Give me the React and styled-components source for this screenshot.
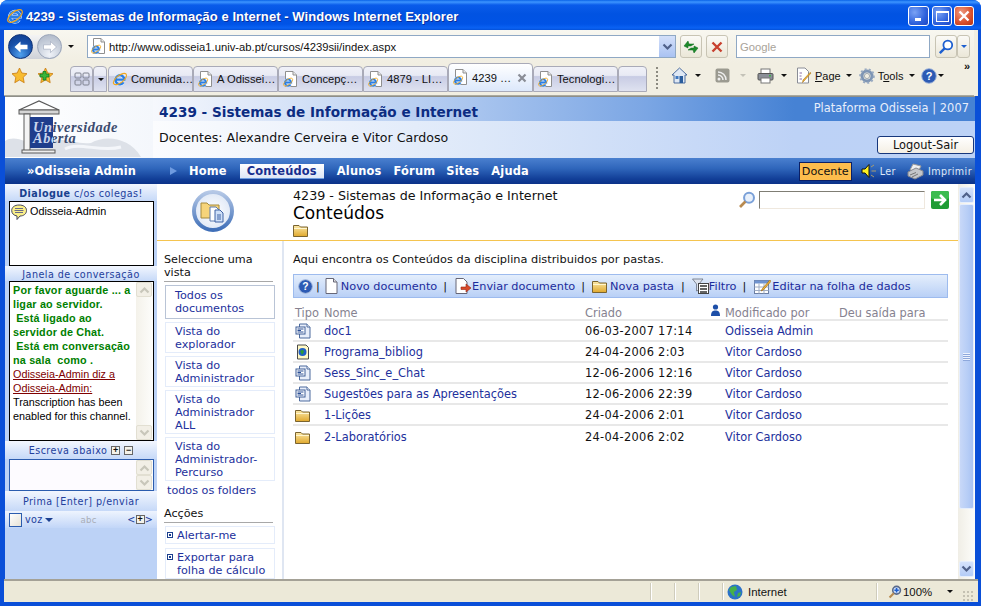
import React from 'react';
import styled, { createGlobalStyle } from 'styled-components';

const Global = createGlobalStyle`
  html, body { margin: 0; padding: 0; background: #fff; overflow: hidden; }
  * { box-sizing: border-box; }
`;
const UI = `"Liberation Sans", Arial, sans-serif`;
const WEB = `"DejaVu Sans", Verdana, sans-serif`;

const Win = styled.div`
  width: 981px; height: 606px; display: flex; flex-direction: column; overflow: hidden;
  border-radius: 8px 8px 0 0; background: #0a4fd8; font-family: ${UI};
`;
const TitleBar = styled.div`
  height: 30px; flex: none; display: flex; align-items: center; padding: 2px 7px 0 6px;
  background: linear-gradient(180deg, #0a63e8 0, #3d95ff 2px, #0a5cea 5px, #0153e2 14px, #0053e6 24px, #0a62f4 28px, #0350d8 30px);
`;
const TitleText = styled.div`
  margin-left: 2px; flex: 1; color: #fff; font: bold 13px ${UI}; letter-spacing: .06px; text-shadow: 1px 1px 0 #0a2f9c; white-space: nowrap;
`;
const WinBtn = styled.div`
  width: ${p => p.$w || 20}px; height: 20px; margin-left: ${p => p.$ml || 0}px; border: 1px solid #fff; border-radius: 3px; position: relative; flex: none;
  background: ${p => p.$close ? 'radial-gradient(circle at 35% 30%, #ee9a80, #d9502c 60%, #b53312)' : 'radial-gradient(circle at 30% 30%, #7aa2f4, #2f62dc 60%, #1c46c4)'};
  display: flex; align-items: center; justify-content: center;
`;
const Frame = styled.div`flex: 1; min-height: 0; display: flex; flex-direction: column; padding: 0 4px 4px 4px;`;
const Chrome = styled.div`flex: none; background: #f1eee2; margin-right: -1px; padding-right: 4px;`;
const AddressRow = styled.div`
  height: 33px; display: flex; align-items: center; padding-left: 4px;
  background: linear-gradient(180deg, #f8f7f0, #f1eee2);
`;
const Capsule = styled.div`
  width: 54px; height: 24px; border-radius: 12px; background: linear-gradient(180deg, #f4f4f4, #cfd2d8); flex: none;
  display: flex; align-items: center; justify-content: space-between; position: relative;
`;
const Round = styled.div`
  width: ${p => p.$size}px; height: ${p => p.$size}px; border-radius: 50%; flex: none; display: flex; align-items: center; justify-content: center;
  background: ${p => p.$on ? 'radial-gradient(circle at 50% 85%, #4ea0ee, #1850a8 55%, #0c3a8c)' : 'radial-gradient(circle at 50% 85%, #f0f3f8, #c3cbd8 60%, #a9b3c4)'};
  border: 1px solid ${p => p.$on ? '#0f3276' : '#9aa5b8'};
`;
const Caret = styled.span`
  display: inline-block; flex: none; width: 0; height: 0; margin-left: ${p => p.$ml ?? 0}px;
  border-left: ${p => p.$s || 3.5}px solid transparent; border-right: ${p => p.$s || 3.5}px solid transparent;
  border-top: ${p => p.$s || 3.5}px solid ${p => p.$c || '#111'};
`;
const Field = styled.div`
  height: 23px; width: ${p => p.$w}px; margin-left: ${p => p.$ml || 0}px; flex: none; display: flex; align-items: center;
  background: #fff; border: 1px solid #8fa8c4; font-size: 11.25px; color: ${p => p.$muted ? '#a9a49a' : '#111'}; padding-left: ${p => p.$pl ?? 4}px; white-space: nowrap;
`;
const Url = styled.span`margin-left: 2px; flex: 1;`;
const DropBtn = styled.div`
  width: 16px; height: 21px; flex: none; background: linear-gradient(180deg, #d4e0fa, #a9c2f2); display: flex; align-items: center; justify-content: center;
`;
const ToolBtn = styled.div`
  width: ${p => p.$w || 22}px; height: 23px; margin-left: ${p => p.$ml || 0}px; flex: none; display: flex; align-items: center; justify-content: center;
  border: 1px solid #c8c4b4; border-radius: 3px; background: linear-gradient(180deg, #fbfaf6, #ebe7d8);
`;
const TabRow = styled.div`
  height: 33px; display: flex; align-items: flex-end; padding-bottom: 3px; position: relative;
  border-bottom: 1px solid #a9a99e;
`;
const FavArea = styled.div`width: 66px; height: 29px; flex: none; display: flex; align-items: center; padding: 0 0 5px 7px; gap: 9px;`;
const Tab = styled.div`
  width: ${p => p.$w || 85}px; height: ${p => p.$active ? 29 : 26}px; flex: none; display: flex; align-items: center; gap: 3px; padding: 0 ${p => p.$active ? 5 : 2}px 0 3px;
  border: 1px solid #a9aab8; border-radius: 4px 4px 0 0; font-size: 11.2px; color: #111; white-space: nowrap;
  background: ${p => p.$active ? 'linear-gradient(180deg, #ffffff, #dce8fb)' : 'linear-gradient(180deg, #f0f1f8 0, #e8eaf4 35%, #c8cce4 40%, #dfe2f0 100%)'};
  justify-content: ${p => p.$center ? 'center' : 'flex-start'};
  margin-right: ${p => p.$mr ?? 0}px;
`;
const TabLabel = styled.span`flex: 1;`;
const Grip = styled.div`
  width: 2px; height: 23px; margin: 0 0 2px 9px; flex: none; background: repeating-linear-gradient(180deg, #8c8a80 0 2px, transparent 2px 4px);
`;
const Commands = styled.div`
  flex: 1; height: 29px; display: flex; align-items: center; padding: 0 0 4px 0; font-size: 11px; color: #111; position: relative;
`;
const Cmd = styled.div`display: flex; align-items: center; gap: 3px; margin-left: ${p => p.$ml}px; flex: none;`;
const U = styled.span`text-decoration: underline;`;
const More = styled.span`position: absolute; right: 5px; top: -3px; font: bold 11px ${UI}; letter-spacing: -1px;`;

const PageArea = styled.div`flex: 1; min-height: 0; display: flex; flex-direction: column; background: #fff; margin-left: 1px; margin-right: 2px; border-top: 1px solid #8f8f88;`;
const Header = styled.div`height: 61px; flex: none; display: flex;`;
const LogoBox = styled.div`width: 148px; flex: none; background: linear-gradient(90deg, #fff, #f4f7fc);`;
const HeadMain = styled.div`flex: 1; display: flex; flex-direction: column; position: relative;`;
const HeadTop = styled.div`
  height: 24px; flex: none; display: flex; align-items: center; justify-content: space-between; padding: 0 6px;
  background: linear-gradient(90deg, #f6f8fd 0, #b8cff2 32%, #7ba6e4 60%, #4682d4 78%, #4682d4 100%);
`;
const CourseTitle = styled.div`font: bold 13.6px ${WEB}; color: #0c2c82; white-space: nowrap; margin-top: 5px;`;
const Platform = styled.div`font: 11.4px ${WEB}; color: #e8eefb; letter-spacing: .05px; margin-bottom: 2px;`;
const HeadBottom = styled.div`
  flex: 1; display: flex; justify-content: space-between; padding: 9px 1px 0 6px;
  background: linear-gradient(90deg, #fbfcfe 0, #dde8f9 40%, #bdd2f6 78%, #bcd2f6 100%);
`;
const Teachers = styled.div`font: 12.6px ${WEB}; color: #111; white-space: nowrap;`;
const Logout = styled.div`
  width: 97px; height: 18px; margin-top: 6px; border: 1.5px solid #17377c; border-radius: 3px; background: linear-gradient(180deg, #fff, #f4efe4);
  display: flex; align-items: center; justify-content: center; font: 11.4px ${WEB}; color: #111;
`;
const NavBar = styled.div`
  height: 26px; flex: none; display: flex; align-items: center; background: linear-gradient(180deg, #4a80cf 0, #2f66bb 40%, #123f98 80%, #0b3288 100%); color: #fff;
`;
const User = styled.div`width: 165px; flex: none; padding-left: 22px; font: bold 11.4px ${WEB}; color: #fff; letter-spacing: .15px; white-space: nowrap;`;
const NavItem = styled.div`
  font: bold 11.4px ${WEB}; margin-left: ${p => p.$ml}px; color: ${p => p.$active ? '#172e8e' : '#fff'}; letter-spacing: .2px; flex: none; text-align: center;
  ${p => p.$active ? 'width: 84px; height: 15px; line-height: 14px; background: linear-gradient(180deg,#fff,#dde6f6); border-bottom: 1px solid #6e9ce0;' : ''}
`;
const Docente = styled.div`
  width: 53px; height: 19px; margin-left: auto; background: #fdbd4d; border: 1px solid #0a1f66; font: 11.2px ${WEB}; color: #111; display: flex; align-items: center; justify-content: center;
`;
const NavTool = styled.div`
  display: flex; align-items: center; gap: ${p => p.$gap}px; margin: 0 ${p => p.$mr || 0}px 0 ${p => p.$ml}px; font: 9.6px ${WEB}; letter-spacing: .4px; color: #dfe8f8; flex: none;
`;
const Body = styled.div`flex: 1; min-height: 0; display: flex;`;
const Side = styled.div`width: 152px; flex: none; background: #bcd2f6; display: flex; flex-direction: column; overflow: hidden;`;
const SideHead = styled.div`
  height: ${p => p.$h}px; flex: none; display: flex; align-items: center; justify-content: center; gap: ${p => p.$gap || 0}px; font: 9.6px ${WEB}; letter-spacing: .45px; color: #23409c; white-space: nowrap; padding-top: ${p => p.$pt || 0}px;
  background: linear-gradient(180deg, #f2f6fe, #c6d9f8);
`;
const Strong = styled.b`color: #18418f;`;
const SmallBox = styled.span`
  width: 9px; height: 9px; border: 1px solid #666; background: #f4f2ea; display: inline-flex; align-items: center; justify-content: center; font: bold 9px/7px ${UI}; color: #111; flex: none;
`;
const Users = styled.div`
  height: 65px; flex: none; margin: 0 3px 0 4px; background: #fff; border: 1px solid #000; display: flex; align-items: flex-start; gap: 2px; padding: 2px 1px; font: 10.8px/14px ${UI}; color: #000;
`;
const Chat = styled.div`
  height: 160px; flex: none; margin: 0 3px 0 4px; background: #fff; border: 1px solid #000; display: flex; overflow: hidden;
`;
const ChatText = styled.div`flex: 1; padding: 1px 0 0 3px; font: 10.8px/14px ${UI}; color: #000; min-width: 0;`;
const Green = styled.div`color: #008000; font-weight: bold; letter-spacing: .18px;`;
const Red = styled.div`color: #800000; text-decoration: underline;`;
const MiniScroll = styled.div`
  width: 17px; flex: none; display: flex; flex-direction: column; justify-content: space-between; background: linear-gradient(90deg, #f4f2ea, #fdfdfb); padding-right: 1px;
`;
const MiniBtn = styled.div`
  height: 15px; flex: none; background: #f2efe6; border: 1px solid #e2dfd2; border-radius: 2px; display: flex; align-items: center; justify-content: center;
`;
const InputBox = styled.div`
  height: 32px; flex: none; margin: 0 3px 0 4px; background: #fdfbff; border: 1.5px solid #2b5cae; display: flex; justify-content: flex-end;
`;
const Voice = styled.div`
  height: 17px; flex: none; display: flex; align-items: center; padding: 0 4px; font: 9.6px ${WEB}; color: #23409c; letter-spacing: .3px;
  background: linear-gradient(180deg, #eef4fe, #c2d6f8);
`;
const Check = styled.span`width: 13px; height: 14px; border: 1.5px solid #2b5cae; background: linear-gradient(135deg,#fff,#e6e2d6); margin-right: 3px; flex: none;`;
const Abc = styled.span`margin-left: 27px; color: #a9adb6; font-size: 8.6px;`;
const Arrows = styled.span`margin-left: auto; display: flex; align-items: center; color: #23409c;`;

const Content = styled.div`flex: 1; min-width: 0; display: flex; flex-direction: column;`;
const Top = styled.div`height: 57px; flex: none; display: flex; border-bottom: 1px solid #f5c44f; position: relative;`;
const Badge = styled.div`width: 136px; flex: none; display: flex; align-items: center; padding: 0 0 3px 35px;`;
const Crumbs = styled.div`flex: 1; padding-top: 4px;`;
const Crumb = styled.div`font: 12.7px/15px ${WEB}; color: #111; white-space: nowrap;`;
const PageTitle = styled.div`font: 17px/20px ${WEB}; color: #000; white-space: nowrap; margin-bottom: 1px;`;
const SearchBox = styled.div`display: flex; align-items: center; height: 18px; margin: 7px 9px 0 0; flex: none;`;
const SearchInput = styled.div`
  width: 166px; height: 18px; margin: 0 6px 0 3px; border: 1px solid #7f7d74; border-right-color: #efe8de; border-bottom-color: #efe8de; background: #fff;
`;
const Lower = styled.div`flex: 1; min-height: 0; display: flex; overflow: hidden;`;
const LeftNav = styled.div`width: 127px; flex: none; border-right: 2px solid #dfe6f2; padding: 12px 6px 0 7px; overflow: hidden;`;
const NavHead = styled.div`font: 11.2px/13px ${WEB}; color: #111; border-bottom: 1px solid #a8a8a8; padding-bottom: 2px; margin: ${p => p.$mt || 0}px 3px 3px 0;`;
const ViewBox = styled.div`
  width: 110px; margin: 0 0 ${p => p.$mb ?? 3}px 1px; padding: ${p => p.$tight ? '2px 2px 1px 1px' : p.$sel ? '3px 3px 3px 9px' : '2px 3px 1px 9px'}; display: flex; gap: 4px;
  border: 1px solid ${p => p.$sel ? '#b9c4d6' : '#e4ecfa'}; font: 11.2px/13px ${WEB}; color: #22309c;
`;
const PlainLink = styled.div`font: 11.2px/13px ${WEB}; color: #22309c; margin: 0 0 0 3px; white-space: nowrap;`;
const Bullet = styled.span`
  width: 6px; height: 6px; border: 1px solid #1b3f8f; flex: none; margin-top: 3px; display: flex; align-items: center; justify-content: center;
  &::after { content: ''; width: 2px; height: 2px; background: #1b3f8f; }
`;
const Main = styled.div`flex: 1; min-width: 0; padding: 11px 10px 0 9px; position: relative;`;
const Intro = styled.div`font: 11.33px/14px ${WEB}; color: #111; margin-bottom: 8px; white-space: nowrap;`;
const ActionBar = styled.div`
  height: 24px; display: flex; align-items: center; padding-left: 4px; border: 1px solid #9dbbee; white-space: nowrap;
  background: linear-gradient(180deg, #e4eefc, #b9d0f6); font: 11.3px ${WEB}; color: #1c2c9c;
`;
const Sep = styled.span`color: #111; margin: 0 ${p => p.$r ?? 6}px 0 ${p => p.$l ?? 6}px;`;
const Action = styled.span`display: inline-flex; align-items: center; gap: ${p => p.$gap ?? 0}px;`;
const Columns = `display: grid; grid-template-columns: 29px 261px 140px 114px 1fr; align-items: center;`;
const HeadRow = styled.div`
  ${Columns} height: 23px; padding: 8px 0 0 2px; border-bottom: 2px solid #e8e8e8; font: 11.4px ${WEB}; color: #868290; white-space: nowrap;
`;
const Row = styled.div`
  ${Columns} height: 21px; padding: 1px 0 0 2px; border-bottom: ${p => p.$last ? 0 : '2px solid #e8e8e8'}; font: 11.4px ${WEB}; color: #111; white-space: nowrap;
`;
const Link = styled.span`color: #22309c;`;
const Stamp = styled.span`letter-spacing: .3px;`;
const ModHead = styled.span`position: relative;`;
const UserIcon = styled.span`position: absolute; left: -15px; top: -2px; display: flex;`;

const Scroll = styled.div`
  width: 17px; flex: none; display: flex; flex-direction: column; background: linear-gradient(90deg, #f0eee6, #fdfdfa); padding: 3px 1px 2px 1px;
`;
const ScrollBtn = styled.div`
  height: 16px; flex: none; background: linear-gradient(180deg, #d5e2fb, #b4ccf7); border: 1px solid #e6eefc; border-radius: 2px; display: flex; align-items: center; justify-content: center;
`;
const Thumb = styled.div`
  height: 305px; margin: 1px 0 auto; flex: none; background: linear-gradient(90deg, #c8d8f8, #b6cdf6 60%, #a9c2f2); border: 1px solid #e6eefc; border-radius: 2px; display: flex; align-items: center; justify-content: center;
`;
const GripLines = styled.div`width: 7px; height: 8px; background: repeating-linear-gradient(180deg, #eef3fe 0 1px, #8ea8dc 1px 2px);`;
const Status = styled.div`
  height: 23px; flex: none; margin-right: -1px; padding-right: 4px; display: flex; align-items: center; background: #ece9d8; border-top: 2px solid #a4a196; font-size: 11.4px; color: #111; position: relative;
`;
const Cell = styled.div`
  width: ${p => p.$w}px; height: 17px; flex: none; border-right: 1px solid #cfccbc; box-shadow: 1px 0 0 #fff; display: flex; align-items: center; gap: 5px; padding-left: ${p => p.$pl || 0}px;
`;
const ZoomCell = styled.div`flex: 1; height: 17px; display: flex; align-items: center; gap: 1px; padding-left: 11px;`;
const Resize = styled.div`
  position: absolute; right: 5px; bottom: 1px; width: 11px; height: 11px;
  background: radial-gradient(circle, #c4c1b2 1px, transparent 1.2px) 0 0 / 4px 4px;
`;

const IeE = ({ w = 2.3 }) => (
  <>
    <path d="M3.6 8.6H12.4A4.5 4.5 0 1 0 11.6 11.3" fill="none" stroke="#dcecff" strokeWidth={w + 1} />
    <path d="M3.6 8.6H12.4A4.5 4.5 0 1 0 11.6 11.3" fill="none" stroke="#2a7fe6" strokeWidth={w} />
    <ellipse cx="8" cy="8" rx="7.8" ry="3.6" transform="rotate(-38 8 8)" fill="none" stroke="#f0a71d" strokeWidth="1.1" />
  </>
);
const IeLogo = ({ s = 16 }) => (
  <svg width={s} height={s} viewBox="0 0 16 16" style={{ flex: 'none' }}><IeE /></svg>
);
const PageIe = () => (
  <svg width="17" height="17" viewBox="0 0 17 17" style={{ flex: 'none' }}>
    <path d="M3.5 .5H11L14.5 4V15.5H3.5Z" fill="#fff" stroke="#8f8f8f" />
    <path d="M11 .5V4H14.5" fill="#e8e8e8" stroke="#8f8f8f" />
    <g transform="translate(.5 5.5) scale(.7)"><IeE w={2.6} /></g>
  </svg>
);
const Arrow = ({ dir, c = '#fff' }) => (
  <svg width="16" height="14" viewBox="0 0 16 14" style={dir === 'r' ? { transform: 'scaleX(-1)' } : undefined}>
    <path d="M1.5 7L7.5 1.5V4.8H14.5V9.2H7.5V12.5Z" fill={c} stroke={dir === 'r' ? '#9aa5b8' : 'none'} strokeWidth=".6" />
  </svg>
);
const Star = ({ plus }) => (
  <svg width="17" height="17" viewBox="0 0 17 17" style={{ flex: 'none' }}>
    <path d="M8.5 1L10.8 6L16 6.7L12.2 10.3L13.2 15.7L8.5 13L3.8 15.7L4.8 10.3L1 6.7L6.2 6Z" fill="#f8bc30" stroke="#c87a10" strokeWidth=".8" />
    {plus && <path d="M3 7H6V4.5H9V7H12V10H9V13H6V10H3Z" fill="#39b539" stroke="#0f7a1f" strokeWidth=".8" />}
  </svg>
);
const Tiles = () => (
  <svg width="16" height="14" viewBox="0 0 16 14">
    {[[1, 1], [9, 1], [1, 8], [9, 8]].map(([x, y], i) => <rect key={i} x={x} y={y} width="6" height="5" rx="1" fill="none" stroke="#7e8290" />)}
  </svg>
);
const Home = () => (
  <svg width="17" height="17" viewBox="0 0 17 17" style={{ flex: 'none' }}>
    <path d="M8.5 1L16 8H14V16H3V8H1Z" fill="#dfe8f4" stroke="#3b5f96" strokeWidth=".9" />
    <rect x="8.5" y="9" width="3.5" height="7" fill="#2a5c9c" />
    <rect x="4.5" y="9" width="3" height="3" fill="#3e78c0" />
  </svg>
);
const Rss = () => (
  <svg width="15" height="15" viewBox="0 0 15 15" style={{ flex: 'none' }}>
    <rect x=".5" y=".5" width="14" height="14" rx="2" fill="#9b9a90" />
    <circle cx="4" cy="11" r="1.5" fill="#eee" />
    <path d="M3 7A5 5 0 0 1 8 12M3 4A8 8 0 0 1 11 12" fill="none" stroke="#eee" strokeWidth="1.5" />
  </svg>
);
const Printer = () => (
  <svg width="17" height="16" viewBox="0 0 17 16" style={{ flex: 'none' }}>
    <rect x="4" y="1" width="9" height="5" fill="#fff" stroke="#777" />
    <rect x="1" y="5.5" width="15" height="6.5" rx="1" fill="#8b8f98" stroke="#555" />
    <rect x="4" y="10" width="9" height="5" fill="#fff" stroke="#777" />
    <rect x="12" y="7" width="2" height="1.5" fill="#3fb04a" />
  </svg>
);
const PageTool = () => (
  <svg width="16" height="17" viewBox="0 0 16 17" style={{ flex: 'none' }}>
    <path d="M1.5 1H9L12.5 4.5V16H1.5Z" fill="#fff" stroke="#8a8d96" />
    <path d="M3.5 6H6M3.5 9H5.5M3.5 12H6" stroke="#8a6fa8" />
    <path d="M15 6L8 14L6.5 15.5L7 13L14 5.5Z" fill="#f3b63c" stroke="#a9741a" strokeWidth=".6" />
  </svg>
);
const Gear = () => (
  <svg width="16" height="16" viewBox="0 0 16 16" style={{ flex: 'none' }}>
    <circle cx="8" cy="8" r="5" fill="none" stroke="#7e95b4" strokeWidth="3" />
    <circle cx="8" cy="8" r="6.8" fill="none" stroke="#98a9c0" strokeWidth="2" strokeDasharray="2 2.2" />
    <circle cx="8" cy="8" r="2.6" fill="#f1eee2" stroke="#6f7d92" strokeWidth=".6" />
  </svg>
);
const Help = ({ s = 16 }) => (
  <svg width={s} height={s} viewBox="0 0 16 16" style={{ flex: 'none' }}>
    <circle cx="8" cy="8" r="7.3" fill="#2c5ab4" stroke="#9fb3d8" />
    <text x="8" y="12" textAnchor="middle" fontFamily="Liberation Sans" fontWeight="bold" fontSize="11" fill="#fff">?</text>
  </svg>
);
const Magnifier = ({ c = '#1d5fd0', s = 16, h = '#fff', plus }) => (
  <svg width={s} height={s} viewBox="0 0 16 16" style={{ flex: 'none' }}>
    <circle cx="9.8" cy="6" r="4.4" fill={h} stroke={c} strokeWidth="1.8" />
    <path d="M6.6 9.4L1.8 14.2" stroke={c === '#1d5fd0' ? c : '#b88a50'} strokeWidth="2.4" />
    {plus && <path d="M7.3 6H12.3M9.8 3.5V8.5" stroke="#1d5fd0" strokeWidth="1.8" />}
  </svg>
);
const Doc = () => (
  <svg width="16" height="16" viewBox="0 0 16 16">
    <path d="M4.5 1H12L15 4V15H4.5Z" fill="#e8eefa" stroke="#4d6b9e" />
    <path d="M12 1V4H15" fill="#fff" stroke="#4d6b9e" />
    <rect x="1" y="4" width="9" height="7" fill="#fff" stroke="#3f5f98" />
    <path d="M2.5 6H8.5M2.5 7.5H6M2.5 9H8.5" stroke="#2a4f96" />
  </svg>
);
const WebDoc = () => (
  <svg width="16" height="16" viewBox="0 0 16 16">
    <path d="M2.5 1H11L13.5 3.5V15H2.5Z" fill="#fff9c4" stroke="#4a4a4a" />
    <circle cx="7.5" cy="8" r="4" fill="#1f5fc8" />
    <path d="M5 7L8 5.5L9 8L7 11Z" fill="#2d9a3a" />
  </svg>
);
const Folder = ({ w = 16, h = 13 }) => (
  <svg width={w} height={h} viewBox="0 0 16 13" style={{ flex: 'none', display: 'block' }}>
    <defs><linearGradient id="fg" x1="0" y1="0" x2="0" y2="1"><stop offset="0" stopColor="#fbe8a8" /><stop offset="1" stopColor="#e0a82c" /></linearGradient></defs>
    <path d="M.5 12.5V1.5H6L7.5 3H14.5V12.5Z" fill="url(#fg)" stroke="#7a6430" />
    <path d="M1 4.5H14" stroke="#fff6cf" />
  </svg>
);
const NewDoc = () => (
  <svg width="13" height="16" viewBox="0 0 13 16" style={{ flex: 'none' }}>
    <path d="M1 .5H8.5L12 4V15.5H1Z" fill="#fff" stroke="#667" />
    <path d="M8.5 .5V4H12" fill="#ddd" stroke="#667" />
  </svg>
);
const SendDoc = () => (
  <svg width="17" height="16" viewBox="0 0 17 16" style={{ flex: 'none' }}>
    <path d="M1 .5H8.5L12 4V15.5H1Z" fill="#fff" stroke="#667" />
    <path d="M6 9H11V6L16 10L11 14V11.5H6Z" fill="#d8492a" stroke="#98240f" strokeWidth=".6" />
  </svg>
);
const Funnel = () => (
  <svg width="17" height="16" viewBox="0 0 17 16" style={{ flex: 'none' }}>
    <path d="M.5 1H11L7 6V12L4.5 13V6Z" fill="#dde3ee" stroke="#68707f" strokeWidth=".8" />
    <rect x="6.5" y="5.5" width="10" height="10" fill="#fff" stroke="#444" />
    <path d="M8 8H15M8 11H15M8 14H15" stroke="#333" strokeWidth="1.4" />
  </svg>
);
const Sheet = () => (
  <svg width="17" height="17" viewBox="0 0 17 17" style={{ flex: 'none' }}>
    <rect x=".5" y="2.5" width="14" height="13" fill="#fff" stroke="#6c7fa4" />
    <rect x=".5" y="2.5" width="14" height="3" fill="#6f93d0" />
    <path d="M.5 9H14.5M.5 12.5H14.5M5 5.5V15.5M10 5.5V15.5" stroke="#a0adc4" />
    <path d="M16 2L8.5 10.5L7 13L9.5 11.8L16.8 3.5Z" fill="#f3b63c" stroke="#9c6a14" strokeWidth=".7" />
  </svg>
);
const Bubble = () => (
  <svg width="17" height="17" viewBox="0 0 17 17" style={{ flex: 'none' }}>
    <path d="M8 1C12.5 1 15.5 3 15.5 6.5S12.5 12 9 12L6 15.5V12C3 11.5 .7 9.7 .7 6.5S3.5 1 8 1Z" fill="#fbf08a" stroke="#44465c" />
    <path d="M4 4.5H12M3.5 6.5H12.5M4 8.5H12" stroke="#6a6c88" />
  </svg>
);
const Chev = ({ up, c = '#50618a', w = 11 }) => (
  <svg width={w} height="8" viewBox="0 0 11 8" style={up ? { transform: 'scaleY(-1)' } : undefined}>
    <path d="M1.5 1.5L5.5 5.5L9.5 1.5" fill="none" stroke={c} strokeWidth="2.2" />
  </svg>
);
const Speaker = () => (
  <svg width="16" height="16" viewBox="0 0 16 16" style={{ flex: 'none' }}>
    <path d="M1 6H4L8 1.5V14.5L4 10H1Z" fill="#fdf021" stroke="#111" />
    <path d="M10 4L13 2M10.5 8H15M10 12L13 14" stroke="#a89c70" />
  </svg>
);
const NavPrinter = () => (
  <svg width="17" height="17" viewBox="0 0 17 17" style={{ flex: 'none' }}>
    <path d="M6 1L14 3L11 9L3 7Z" fill="#f0f0f0" stroke="#9a9a9a" />
    <path d="M1 9L9 5L16 8V12L8 16L1 13Z" fill="#c4c6ca" stroke="#85878e" />
    <path d="M3 12L9 9.5M5 14L11 11" stroke="#777" />
  </svg>
);
const NavArrow = () => (
  <svg width="7" height="8" viewBox="0 0 7 8" style={{ flex: 'none' }}><path d="M0 0L7 4L0 8Z" fill="#6f9be0" /></svg>
);
const GreenGo = () => (
  <svg width="18" height="18" viewBox="0 0 18 18" style={{ flex: 'none' }}>
    <rect width="18" height="18" rx="2" fill="#1f9c35" />
    <rect width="18" height="8" rx="2" fill="#3cbc50" />
    <path d="M3 9H13M9 4L14 9L9 14" fill="none" stroke="#fff" strokeWidth="2.6" />
  </svg>
);
const Badge3D = () => (
  <svg width="42" height="42" viewBox="0 0 42 42">
    <defs>
      <linearGradient id="ring" x1="0" y1="0" x2="0" y2="1"><stop offset="0" stopColor="#b5c8e6" /><stop offset="1" stopColor="#3f6fb8" /></linearGradient>
      <radialGradient id="disc"><stop offset="0" stopColor="#ffffff" /><stop offset="1" stopColor="#dfe8f6" /></radialGradient>
    </defs>
    <circle cx="21" cy="21" r="19" fill="url(#disc)" stroke="url(#ring)" strokeWidth="4" />
    <path d="M9 13H15L17 15H27V28H9Z" fill="#f6d47a" stroke="#a58a3c" />
    <path d="M18 17H24L27 20V31H18Z" fill="#fff" stroke="#5a7ab0" />
    <path d="M23 20H28L31 23V32H23Z" fill="#cfe0f8" stroke="#3f62a4" />
    <path d="M25 25H29M25 27H29M25 29H29" stroke="#3f62a4" />
  </svg>
);
const LogoArt = () => (
  <svg width="148" height="60" viewBox="0 0 148 60" style={{ display: 'block' }}>
    <defs>
      <linearGradient id="logoInk" gradientUnits="userSpaceOnUse" x1="0" y1="0" x2="148" y2="0">
        <stop offset="0.324" stopColor="#c9d5ee" /><stop offset="0.324" stopColor="#3c4a6e" />
      </linearGradient>
    </defs>
    <path d="M0 44C12 36 24 50 40 46C56 38 70 48 86 46C100 38 124 40 136 60H0Z" fill="#dde1e8" />
    <path d="M60 52C74 44 96 56 116 50" fill="none" stroke="#f4f6fa" strokeWidth="3" />
    <path d="M14 13L34 4L54 13Z" fill="#fff" stroke="#5a5a5a" strokeWidth="1.2" />
    <rect x="14" y="13" width="40" height="4" fill="#d5d5d5" stroke="#5a5a5a" />
    <rect x="19" y="17" width="6" height="37" fill="#f4f4f4" stroke="#5a5a5a" />
    <rect x="25" y="20" width="23" height="31" fill="#1f3d8c" />
    <rect x="17" y="53" width="33" height="3" fill="#eee" stroke="#5a5a5a" />
    <text x="28" y="35" fontFamily="Liberation Serif" fontStyle="italic" fontWeight="bold" fontSize="14.4" letterSpacing=".55" fill="url(#logoInk)">Universidade</text>
    <text x="28" y="46" fontFamily="Liberation Serif" fontStyle="italic" fontWeight="bold" fontSize="14.4" letterSpacing=".55" fill="url(#logoInk)">Aberta</text>
  </svg>
);

const tabs = ['Comunida…', 'A Odissei…', 'Concepç…', '4879 - LI…'];
const rows = [
  ['doc', 'doc1', '06-03-2007 17:14', 'Odisseia Admin'],
  ['web', 'Programa_bibliog', '24-04-2006 2:03', 'Vitor Cardoso'],
  ['doc', 'Sess_Sinc_e_Chat', '12-06-2006 12:16', 'Vitor Cardoso'],
  ['doc', 'Sugestões para as Apresentações', '12-06-2006 22:39', 'Vitor Cardoso'],
  ['folder', '1-Lições', '24-04-2006 2:01', 'Vitor Cardoso'],
  ['folder', '2-Laboratórios', '24-04-2006 2:02', 'Vitor Cardoso'],
];
const kinds = { doc: <Doc />, web: <WebDoc />, folder: <Folder /> };

export default function App() {
  return (
    <Win>
      <Global />
      <TitleBar>
        <IeLogo s={18} />
        <TitleText>4239 - Sistemas de Informação e Internet - Windows Internet Explorer</TitleText>
        <WinBtn $w={21}><svg width="9" height="9"><rect x="1" y="6" width="6" height="3" fill="#fff" /></svg></WinBtn>
        <WinBtn $ml={3}><svg width="13" height="12"><rect x=".5" y="1.5" width="12" height="10" fill="none" stroke="#fff" /><rect x="1" y="1" width="11" height="2" fill="#fff" /></svg></WinBtn>
        <WinBtn $ml={2} $close><svg width="12" height="12"><path d="M1.5 1.5L10.5 10.5M10.5 1.5L1.5 10.5" stroke="#fff" strokeWidth="2.4" /></svg></WinBtn>
      </TitleBar>
      <Frame>
        <Chrome>
          <AddressRow>
            <Capsule>
              <Round $on $size={25}><Arrow /></Round>
              <Round $size={25}><Arrow dir="r" /></Round>
            </Capsule>
            <Caret $ml={6} />
            <Field $w={589} $ml={13} $pl={2}>
              <PageIe />
              <Url>http://www.odisseia1.univ-ab.pt/cursos/4239sii/index.aspx</Url>
              <DropBtn><Chev /></DropBtn>
            </Field>
            <ToolBtn $ml={4}>
              <svg width="16" height="14" viewBox="0 0 16 14"><path d="M1 6L5 1L6 4H11L8 6H5V8ZM15 8L11 13L10 10H5L8 8H11V6Z" fill="#1d8a2b" stroke="#0c6a1a" strokeWidth=".5" /></svg>
            </ToolBtn>
            <ToolBtn $ml={4}>
              <svg width="12" height="12"><path d="M1.5 1.5L10.5 10.5M10.5 1.5L1.5 10.5" stroke="#c8412f" strokeWidth="2.4" /></svg>
            </ToolBtn>
            <Field $w={194} $ml={8} $muted $pl={3}>Google</Field>
            <ToolBtn $ml={5} $w={22}><Magnifier /></ToolBtn>
            <ToolBtn $w={13}><Caret $c="#1d5fd0" $s={3} /></ToolBtn>
          </AddressRow>
          <TabRow>
            <FavArea><Star /><Star plus /></FavArea>
            <Tab $w={23} $center><Tiles /></Tab>
            <Tab $w={14} $center $mr={1}><Caret $s={3} /></Tab>
            {tabs.map((t, i) => (
              <Tab key={t}>{i === 0 ? <IeLogo s={16} /> : <PageIe />}<TabLabel>{t}</TabLabel></Tab>
            ))}
            <Tab $active><PageIe /><TabLabel>4239 …</TabLabel>
              <svg width="10" height="10"><path d="M1.5 1.5L8.5 8.5M8.5 1.5L1.5 8.5" stroke="#8a8d96" strokeWidth="2.2" /></svg>
            </Tab>
            <Tab><PageIe /><TabLabel>Tecnologi…</TabLabel></Tab>
            <Tab $w={29} />
            <Grip />
            <Commands>
              <Cmd $ml={13}><Home /><Caret $ml={4} /></Cmd>
              <Cmd $ml={14}><Rss /><Caret $ml={7} $c="#c4c2b8" /></Cmd>
              <Cmd $ml={11}><Printer /><Caret $ml={4} /></Cmd>
              <Cmd $ml={9}><PageTool /><span><U>P</U>age</span><Caret $ml={2} /></Cmd>
              <Cmd $ml={7}><Gear /><span>T<U>o</U>ols</span><Caret $ml={3} /></Cmd>
              <Cmd $ml={6}><Help /><Caret $ml={-2} /></Cmd>
              <More>»</More>
            </Commands>
          </TabRow>
        </Chrome>
        <PageArea>
          <Header>
            <LogoBox><LogoArt /></LogoBox>
            <HeadMain>
              <HeadTop>
                <CourseTitle>4239 - Sistemas de Informação e Internet</CourseTitle>
                <Platform>Plataforma Odisseia | 2007</Platform>
              </HeadTop>
              <HeadBottom>
                <Teachers>Docentes: Alexandre Cerveira e Vitor Cardoso</Teachers>
                <Logout>Logout-Sair</Logout>
              </HeadBottom>
            </HeadMain>
          </Header>
          <NavBar>
            <User>»Odisseia Admin</User>
            <NavArrow />
            <NavItem $ml={12}>Home</NavItem>
            <NavItem $ml={13} $active>Conteúdos</NavItem>
            <NavItem $ml={13}>Alunos</NavItem>
            <NavItem $ml={12}>Fórum</NavItem>
            <NavItem $ml={11}>Sites</NavItem>
            <NavItem $ml={12}>Ajuda</NavItem>
            <Docente>Docente</Docente>
            <NavTool $ml={9} $gap={3}><Speaker /><span>Ler</span></NavTool>
            <NavTool $ml={11} $gap={4} $mr={3}><NavPrinter /><span>Imprimir</span></NavTool>
          </NavBar>
          <Body>
            <Side>
              <SideHead $h={17} $pt={1}><span><Strong>Dialogue</Strong> c/os colegas!</span></SideHead>
              <Users><Bubble />Odisseia-Admin</Users>
              <SideHead $h={15} $pt={1}>Janela de conversação</SideHead>
              <Chat>
                <ChatText>
                  <Green>Por favor aguarde ... a<br />ligar ao servidor.<br />&nbsp;Está ligado ao<br />servidor de Chat.<br />&nbsp;Está em conversação<br />na sala &nbsp;como .</Green>
                  <Red>Odisseia-Admin diz a<br />Odisseia-Admin:</Red>
                  Transcription has been<br />enabled for this channel.
                </ChatText>
                <MiniScroll>
                  <MiniBtn><Chev up c="#c8c6ba" /></MiniBtn>
                  <MiniBtn><Chev c="#c8c6ba" /></MiniBtn>
                </MiniScroll>
              </Chat>
              <SideHead $h={18} $gap={4} $pt={1}>Escreva abaixo <SmallBox>+</SmallBox><SmallBox>−</SmallBox></SideHead>
              <InputBox>
                <MiniScroll>
                  <MiniBtn><Chev up c="#c8c6ba" /></MiniBtn>
                  <MiniBtn><Chev c="#c8c6ba" /></MiniBtn>
                </MiniScroll>
              </InputBox>
              <SideHead $h={20} $pt={1}>Prima [Enter] p/enviar</SideHead>
              <Voice>
                <Check />voz<Caret $ml={3} $c="#1b3f8f" $s={4} />
                <Abc>abc</Abc>
                <Arrows>&lt;<SmallBox>+</SmallBox>&gt;</Arrows>
              </Voice>
            </Side>
            <Content>
              <Top>
                <Badge><Badge3D /></Badge>
                <Crumbs>
                  <Crumb>4239 - Sistemas de Informação e Internet</Crumb>
                  <PageTitle>Conteúdos</PageTitle>
                  <Folder />
                </Crumbs>
                <SearchBox>
                  <Magnifier c="#7aa0d8" s={18} h="#e8f0fb" />
                  <SearchInput />
                  <GreenGo />
                </SearchBox>
              </Top>
              <Lower>
                <LeftNav>
                  <NavHead>Seleccione uma vista</NavHead>
                  <ViewBox $sel>Todos os documentos</ViewBox>
                  <ViewBox>Vista do explorador</ViewBox>
                  <ViewBox>Vista do Administrador</ViewBox>
                  <ViewBox>Vista do Administrador ALL</ViewBox>
                  <ViewBox>Vista do Administrador-Percurso</ViewBox>
                  <PlainLink>todos os folders</PlainLink>
                  <NavHead $mt={10}>Acções</NavHead>
                  <ViewBox $tight $mb={4}><Bullet />Alertar-me</ViewBox>
                  <ViewBox $tight><Bullet />Exportar para folha de cálculo</ViewBox>
                </LeftNav>
                <Main>
                  <Intro>Aqui encontra os Conteúdos da disciplina distribuidos por pastas.</Intro>
                  <ActionBar>
                    <Help s={15} /><Sep $l={3} $r={5}>|</Sep>
                    <Action $gap={3}><NewDoc />Novo documento</Action><Sep $r={8}>|</Sep>
                    <Action><SendDoc />Enviar documento</Action><Sep $r={7}>|</Sep>
                    <Action $gap={2}><Folder />Nova pasta</Action><Sep $l={7} $r={7}>|</Sep>
                    <Action><Funnel />Filtro</Action><Sep $r={8}>|</Sep>
                    <Action $gap={1}><Sheet />Editar na folha de dados</Action>
                  </ActionBar>
                  <HeadRow>
                    <span>Tipo</span><span>Nome</span><span>Criado</span>
                    <ModHead>
                      <UserIcon>
                        <svg width="11" height="13" viewBox="0 0 11 13"><circle cx="5.5" cy="3" r="2.6" fill="#1d4fa8" /><path d="M1 12C1 7.5 3 6.5 5.5 6.5S10 7.5 10 12Z" fill="#1d4fa8" /></svg>
                      </UserIcon>
                      Modificado por
                    </ModHead>
                    <span>Deu saída para</span>
                  </HeadRow>
                  {rows.map((r, i) => (
                    <Row key={r[1]} $last={i === rows.length - 1}>
                      {kinds[r[0]]}
                      <Link>{r[1]}</Link>
                      <Stamp>{r[2]}</Stamp>
                      <Link>{r[3]}</Link>
                    </Row>
                  ))}
                </Main>
              </Lower>
            </Content>
            <Scroll>
              <ScrollBtn><Chev up /></ScrollBtn>
              <Thumb><GripLines /></Thumb>
              <ScrollBtn><Chev /></ScrollBtn>
            </Scroll>
          </Body>
        </PageArea>
        <Status>
          <Cell $w={647} />
          <Cell $w={24} />
          <Cell $w={24} />
          <Cell $w={24} />
          <Cell $w={154} $pl={4}>
            <svg width="16" height="16" viewBox="0 0 16 16"><circle cx="8" cy="8" r="7.5" fill="#2a72c8" /><path d="M4 3L9 2L10 6L7 8L8 13L5 11L2 6ZM11 9L14 8L13 12L10 13Z" fill="#45b04a" /></svg>
            Internet
          </Cell>
          <ZoomCell>
            <Magnifier c="#5a6a8a" s={14} h="#cfe0fa" plus />100%<Caret $ml={14} $s={3} />
          </ZoomCell>
          <Resize />
        </Status>
      </Frame>
    </Win>
  );
}
